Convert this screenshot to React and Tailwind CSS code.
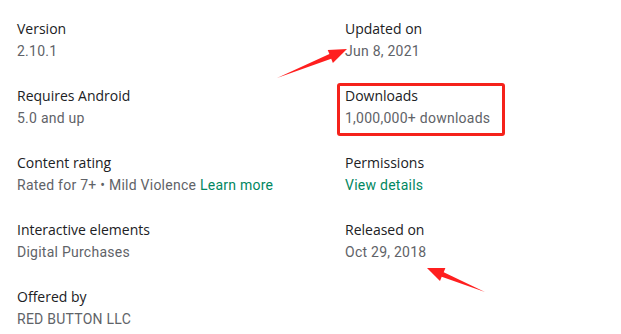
import React from 'react';

const items = [
  { label: 'Version', value: '2.10.1' },
  { label: 'Updated on', value: 'Jun 8, 2021' },
  { label: 'Requires Android', value: '5.0 and up' },
  { label: 'Downloads', value: '1,000,000+ downloads', boxed: true },
  { label: 'Content rating', value: 'Rated for 7+ • Mild Violence', link: 'Learn more' },
  { label: 'Permissions', link: 'View details' },
  { label: 'Interactive elements', value: 'Digital Purchases' },
  { label: 'Released on', value: 'Oct 29, 2018' },
  { label: 'Offered by', value: 'RED BUTTON LLC' },
];

function Item({ label, value, link, boxed }) {
  return (
    <div className="relative">
      {boxed && (
        <div className="pointer-events-none absolute -left-2 -top-[3px] h-[53px] w-[168px] rounded-[3px] border-[3px] border-[#f5221b]" />
      )}
      <div className="font-['Open_Sans',sans-serif] text-[14px] font-medium leading-5 text-[#202124]">
        {label}
      </div>
      <div className="mt-[2px] text-[14px] leading-5 tracking-[0.25px] text-[#5f6368]">
        {value}
        {value && link ? ' ' : null}
        {link && <span className="text-[#01875f]">{link}</span>}
      </div>
    </div>
  );
}

export default function App() {
  return (
    <div className="relative h-[334px] w-[621px] overflow-hidden bg-white font-['Roboto',sans-serif]">
      <div className="grid grid-cols-[328px_1fr] gap-y-[25px] pl-[17px] pt-[19px]">
        {items.map((it) => (
          <Item key={it.label} {...it} />
        ))}
      </div>

      {/* annotation arrows */}
      <svg className="pointer-events-none absolute left-0 top-0" width="621" height="334" viewBox="0 0 621 334">
        <polygon
          fill="#ff1f1f"
          points="277,78 329.4,54.1 327.7,49.9 347,49 332.9,62.9 331.2,58.7"
        />
        <polygon
          fill="#ff1f1f"
          points="485,292 443.7,272.2 445.4,268 427,268 440,281 441.7,276.8"
        />
      </svg>
    </div>
  );
}
